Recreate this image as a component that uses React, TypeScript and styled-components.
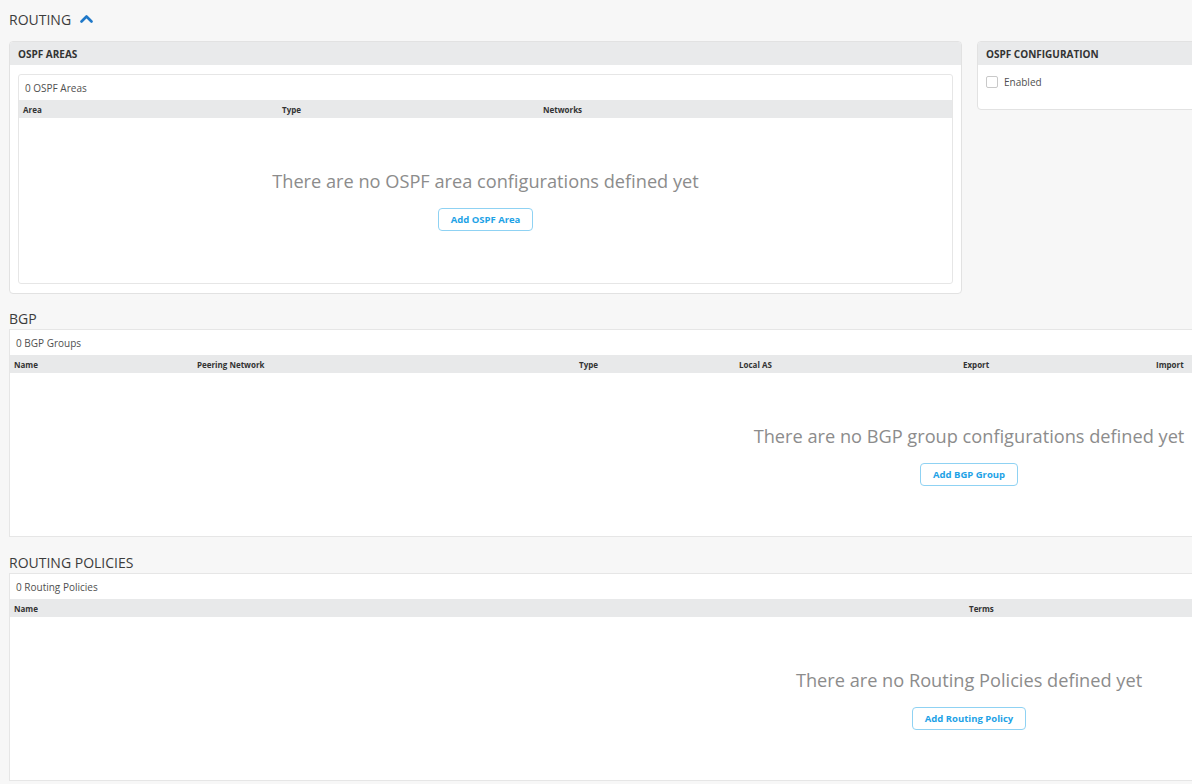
import React from "react";
import styled, { createGlobalStyle } from "styled-components";

const Global = createGlobalStyle`
  html, body { margin: 0; padding: 0; background: #f7f7f7; overflow: hidden; }
  body { font-family: "Open Sans", "Noto Sans", sans-serif; color: #333; }
  * { box-sizing: border-box; }
`;

const Page = styled.div`
  width: 1192px;
  height: 784px;
  padding: 9px 0 0 9px;
  overflow: hidden;
`;

const SectionTitle = styled.h2<{ $top?: number }>`
  margin: ${(p) => p.$top ?? 0}px 0 0 0;
  display: flex;
  align-items: center;
  gap: 9px;
  height: 20px;
  font-size: 14px;
  font-weight: 500;
  color: #3c3c3c;
  letter-spacing: 0;
  white-space: nowrap;
`;

const Chevron = styled.svg`
  width: 13px;
  height: 9px;
  margin-top: -1px;
`;

const TopRow = styled.div`
  display: flex;
  gap: 15px;
  margin-top: 12px;
  align-items: flex-start;
`;

const Card = styled.div<{ $w: number }>`
  width: ${(p) => p.$w}px;
  flex: none;
  background: #fff;
  border: 1px solid #e2e2e2;
  border-radius: 4px;
  overflow: hidden;
`;

const CardHeader = styled.div`
  height: 23px;
  display: flex;
  align-items: center;
  padding: 0 8px;
  background: #e9eaeb;
  font-size: 10px;
  font-weight: 700;
  color: #333;
`;

const CardBody = styled.div<{ $pad: string }>`
  padding: ${(p) => p.$pad};
`;

const InnerTable = styled.div`
  border: 1px solid #e6e6e6;
  border-radius: 3px;
  background: #fff;
`;

const Caption = styled.div`
  height: 25px;
  display: flex;
  align-items: center;
  padding-left: 6px;
  font-size: 10px;
  color: #4f4f4f;
`;

const HeaderBar = styled.div<{ $cols: string }>`
  display: grid;
  grid-template-columns: ${(p) => p.$cols};
  height: 18px;
  align-items: center;
  background: #e8e9ea;
  padding-left: 4px;
  font-size: 8px;
  font-weight: 700;
  color: #333;
`;

const Empty = styled.div<{ $w?: number; $h: number }>`
  height: ${(p) => p.$h}px;
  width: ${(p) => (p.$w ? `${p.$w}px` : "auto")};
  display: flex;
  flex-direction: column;
  align-items: center;
  padding-top: 52px;
`;

const EmptyText = styled.div`
  font-size: 18.2px;
  line-height: 22px;
  color: #8c8c8c;
  white-space: nowrap;
`;

const AddButton = styled.button`
  margin-top: 16px;
  height: 23px;
  padding: 0 12px;
  border: 1px solid #8fd2f3;
  border-radius: 4px;
  background: #fff;
  color: #1ea2e6;
  font-family: "Open Sans", "Noto Sans", sans-serif;
  font-size: 9.5px;
  font-weight: 700;
`;

const CheckRow = styled.label`
  display: flex;
  align-items: center;
  gap: 6px;
  font-size: 10px;
  color: #4f4f4f;
`;

const Box = styled.span`
  width: 12px;
  height: 12px;
  border: 1px solid #c9c9c9;
  border-radius: 2px;
  background: #fff;
`;

const WidePanel = styled.div`
  width: 1920px;
  margin-top: 1px;
  background: #fff;
  border: 1px solid #e6e6e6;
`;

const Cell = styled.span`
  white-space: nowrap;
`;

function EmptyState({ text, button, width, height }: { text: string; button: string; width?: number; height: number }) {
  return (
    <Empty $w={width} $h={height}>
      <EmptyText>{text}</EmptyText>
      <AddButton>{button}</AddButton>
    </Empty>
  );
}

export default function App() {
  return (
    <Page>
      <Global />
      <SectionTitle>
        ROUTING
        <Chevron viewBox="0 0 13 9">
          <path d="M1.5 7.5 L6.5 2.5 L11.5 7.5" fill="none" stroke="#1f78c8" strokeWidth="2.6" strokeLinecap="round" strokeLinejoin="round" />
        </Chevron>
      </SectionTitle>
      <TopRow>
        <Card $w={953}>
          <CardHeader>OSPF AREAS</CardHeader>
          <CardBody $pad="9px 8px 9px 8px">
            <InnerTable>
              <Caption>0 OSPF Areas</Caption>
              <HeaderBar $cols="259px 261px auto">
                <Cell>Area</Cell>
                <Cell>Type</Cell>
                <Cell>Networks</Cell>
              </HeaderBar>
              <EmptyState text="There are no OSPF area configurations defined yet" button="Add OSPF Area" height={165} />
            </InnerTable>
          </CardBody>
        </Card>
        <Card $w={240}>
          <CardHeader>OSPF CONFIGURATION</CardHeader>
          <CardBody $pad="10px 8px 20px 8px">
            <CheckRow>
              <Box />
              Enabled
            </CheckRow>
          </CardBody>
        </Card>
      </TopRow>

      <SectionTitle $top={14}>BGP</SectionTitle>
      <WidePanel>
        <Caption>0 BGP Groups</Caption>
        <HeaderBar $cols="183px 382px 160px 224px 193px auto">
          <Cell>Name</Cell>
          <Cell>Peering Network</Cell>
          <Cell>Type</Cell>
          <Cell>Local AS</Cell>
          <Cell>Export</Cell>
          <Cell>Import</Cell>
        </HeaderBar>
        <EmptyState text="There are no BGP group configurations defined yet" button="Add BGP Group" width={1918} height={163} />
      </WidePanel>

      <SectionTitle $top={15}>ROUTING POLICIES</SectionTitle>
      <WidePanel>
        <Caption>0 Routing Policies</Caption>
        <HeaderBar $cols="955px auto">
          <Cell>Name</Cell>
          <Cell>Terms</Cell>
        </HeaderBar>
        <EmptyState text="There are no Routing Policies defined yet" button="Add Routing Policy" width={1918} height={163} />
      </WidePanel>
    </Page>
  );
}
